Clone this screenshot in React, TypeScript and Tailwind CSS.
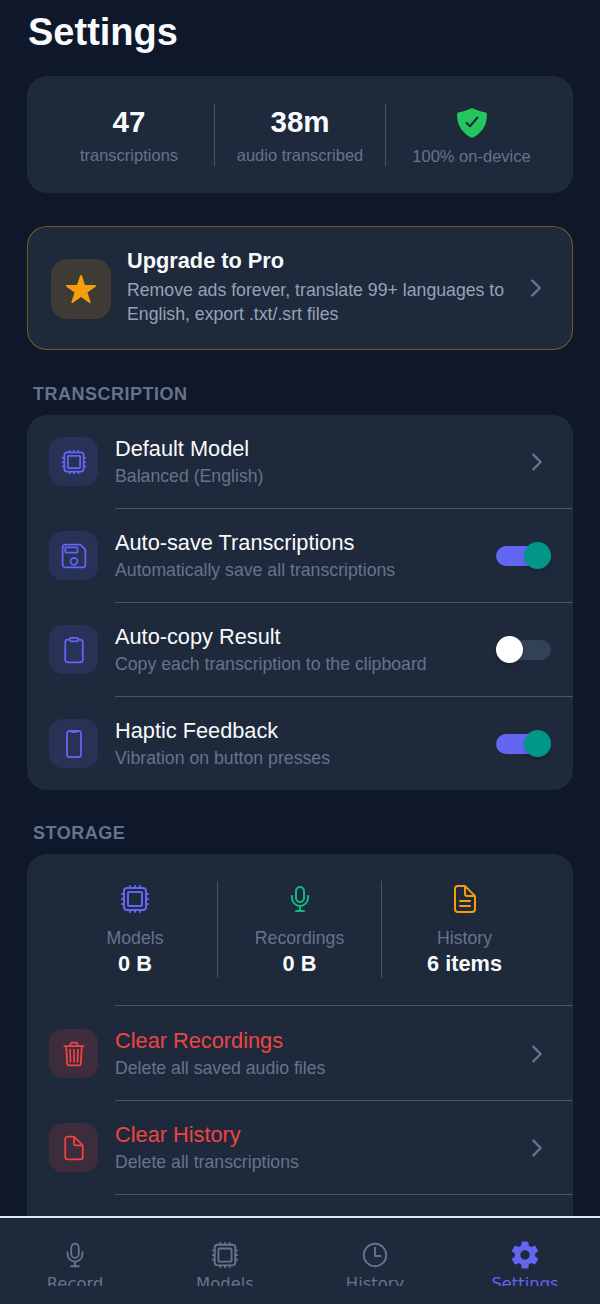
import { ReactNode } from 'react';
import {
  IoChevronForward,
  IoClipboardOutline,
  IoDocumentOutline,
  IoDocumentTextOutline,
  IoHardwareChipOutline,
  IoMicOutline,
  IoPhonePortraitOutline,
  IoSaveOutline,
  IoSettingsSharp,
  IoShieldCheckmark,
  IoStar,
  IoTimeOutline,
  IoTrashOutline,
} from 'react-icons/io5';

function Toggle({ on }: { on: boolean }) {
  return (
    <div className={`flex h-[20px] w-[55px] items-center rounded-full ${on ? 'justify-end bg-[#6366f1]' : 'justify-start bg-[#334155]'}`}>
      <div className={`h-[27px] w-[27px] rounded-full shadow-md ${on ? 'bg-[#009688]' : 'bg-white'}`} />
    </div>
  );
}

function Row({
  icon,
  title,
  subtitle,
  right,
  danger,
  divider,
}: {
  icon: ReactNode;
  title: string;
  subtitle: string;
  right: ReactNode;
  danger?: boolean;
  divider?: boolean;
}) {
  return (
    <div>
      <div className="flex h-[93px] items-center pl-[22px] pr-[22px]">
        <div className={`flex h-[49px] w-[49px] shrink-0 items-center justify-center rounded-[14px] text-[28px] ${danger ? 'bg-[#ef4444]/15 text-[#ef4444]' : 'bg-[#6366f1]/15 text-[#6366f1]'}`}>
          {icon}
        </div>
        <div className="ml-[17px] flex-1">
          <div className={`text-[21.75px] leading-[28px] ${danger ? 'text-[#ef4444]' : 'text-[#f8fafc]'}`}>{title}</div>
          <div className="mt-[1px] text-[17.7px] leading-[24px] text-[#64748b]">{subtitle}</div>
        </div>
        {right}
      </div>
      {divider && <div className="ml-[88px] h-[1px] bg-[#475569]" />}
    </div>
  );
}

const chevron = <IoChevronForward className="mr-[1px] text-[26px] text-[#64748b]" />;

function StorageStat({ icon, label, value, line }: { icon: ReactNode; label: string; value: string; line?: boolean }) {
  return (
    <div className={`flex h-[97px] w-[164.5px] flex-col items-center ${line ? 'border-r border-[#475569]' : ''}`}>
      <div className="flex h-[37px] items-center text-[32px]">{icon}</div>
      <div className="mt-[10px] text-[17.7px] leading-[24px] text-[#64748b]">{label}</div>
      <div className="text-[21.75px] leading-[28px] font-bold text-[#f8fafc]">{value}</div>
    </div>
  );
}

function NavItem({ icon, label, active }: { icon: ReactNode; label: string; active?: boolean }) {
  return (
    <div className={`flex w-[150px] flex-col items-center ${active ? 'text-[#6366f1]' : 'text-[#64748b]'}`}>
      <div className="flex h-[32px] items-center text-[30px]">{icon}</div>
      {/* label is cut off by its box in the reference */}
      <div className="mt-[2px] h-[13px] overflow-hidden text-[16.4px] leading-[22px] font-['DejaVu_Sans',sans-serif]">{label}</div>
    </div>
  );
}

export default function App() {
  return (
    <div className="flex h-[1304px] w-[600px] flex-col overflow-hidden bg-[#0f172a] font-['Liberation_Sans',sans-serif]">
      <main className="min-h-0 flex-1 overflow-hidden px-[27px]">
        <h1 className="mt-[9px] pl-[1px] text-[38px] leading-[46px] font-bold text-[#f8fafc]">Settings</h1>

        {/* Stats */}
        <div className="mt-[21px] flex h-[117px] items-center rounded-[20px] bg-[#1e293b] pl-[17px] pr-[16px]">
          <div className="flex h-[62px] w-[171px] flex-col items-center border-r border-[#475569]">
            <div className="text-[29.5px] leading-[36px] font-bold text-[#f8fafc]">47</div>
            <div className="mt-[3px] text-[16.5px] leading-[24px] text-[#64748b]">transcriptions</div>
          </div>
          <div className="flex h-[62px] w-[171px] flex-col items-center border-r border-[#475569]">
            <div className="text-[29.5px] leading-[36px] font-bold text-[#f8fafc]">38m</div>
            <div className="mt-[3px] text-[16.5px] leading-[24px] text-[#64748b]">audio transcribed</div>
          </div>
          <div className="flex h-[62px] flex-1 flex-col items-center">
            <IoShieldCheckmark className="mt-[2px] shrink-0 text-[34px] text-[#22c55e]" />
            <div className="mt-[4px] shrink-0 text-[16.5px] leading-[24px] text-[#64748b]">100% on-device</div>
          </div>
        </div>

        {/* Upgrade */}
        <div className="mt-[33px] flex h-[124px] items-center rounded-[20px] border border-[#f59e0b]/40 bg-[#1e293b] pl-[23px] pr-[23px]">
          <div className="mt-[2px] flex h-[60px] w-[60px] shrink-0 items-center justify-center rounded-[16px] bg-[#f59e0b]/15">
            <IoStar className="text-[32px] text-[#f59e0b]" />
          </div>
          <div className="ml-[16px] -mt-[3px] flex-1">
            <div className="text-[21.75px] leading-[28px] font-bold text-[#f8fafc]">Upgrade to Pro</div>
            <div className="mt-[3px] text-[17.7px] leading-[24.5px] text-[#94a3b8]">
              Remove ads forever, translate 99+ languages to English, export .txt/.srt files
            </div>
          </div>
          <IoChevronForward className="text-[26px] text-[#64748b]" />
        </div>

        {/* Transcription */}
        <div className="mt-[32px] pl-[6px] text-[18px] leading-[24px] font-bold tracking-[0.5px] text-[#64748b]">TRANSCRIPTION</div>
        <div className="mt-[9px] rounded-[20px] bg-[#1e293b]">
          <Row icon={<IoHardwareChipOutline />} title="Default Model" subtitle="Balanced (English)" right={chevron} divider />
          <Row icon={<IoSaveOutline />} title="Auto-save Transcriptions" subtitle="Automatically save all transcriptions" right={<Toggle on />} divider />
          <Row icon={<IoClipboardOutline />} title="Auto-copy Result" subtitle="Copy each transcription to the clipboard" right={<Toggle on={false} />} divider />
          <Row icon={<IoPhonePortraitOutline />} title="Haptic Feedback" subtitle="Vibration on button presses" right={<Toggle on />} />
        </div>

        {/* Storage */}
        <div className="mt-[31px] pl-[6px] text-[18px] leading-[24px] font-bold tracking-[0.5px] text-[#64748b]">STORAGE</div>
        <div className="mt-[9px] rounded-[20px] bg-[#1e293b]">
          <div className="flex justify-center pt-[27px] pb-[27px]">
            <StorageStat icon={<IoHardwareChipOutline className="text-[#6366f1]" />} label="Models" value="0 B" line />
            <StorageStat icon={<IoMicOutline className="text-[#10b981]" />} label="Recordings" value="0 B" line />
            <StorageStat icon={<IoDocumentTextOutline className="text-[#f59e0b]" />} label="History" value="6 items" />
          </div>
          <div className="ml-[88px] h-[1px] bg-[#475569]" />
          <div className="pt-[1px]">
            <Row danger icon={<IoTrashOutline />} title="Clear Recordings" subtitle="Delete all saved audio files" right={chevron} divider />
            <Row danger icon={<IoDocumentOutline />} title="Clear History" subtitle="Delete all transcriptions" right={chevron} divider />
          </div>
          <div className="h-[60px]" />
        </div>
      </main>

      <nav className="flex h-[88px] shrink-0 border-t-2 border-[#e2e8f0] bg-[#1e293b] pt-[21px]">
        <NavItem icon={<IoMicOutline />} label="Record" />
        <NavItem icon={<IoHardwareChipOutline />} label="Models" />
        <NavItem icon={<IoTimeOutline />} label="History" />
        <NavItem icon={<IoSettingsSharp />} label="Settings" active />
      </nav>
    </div>
  );
}
